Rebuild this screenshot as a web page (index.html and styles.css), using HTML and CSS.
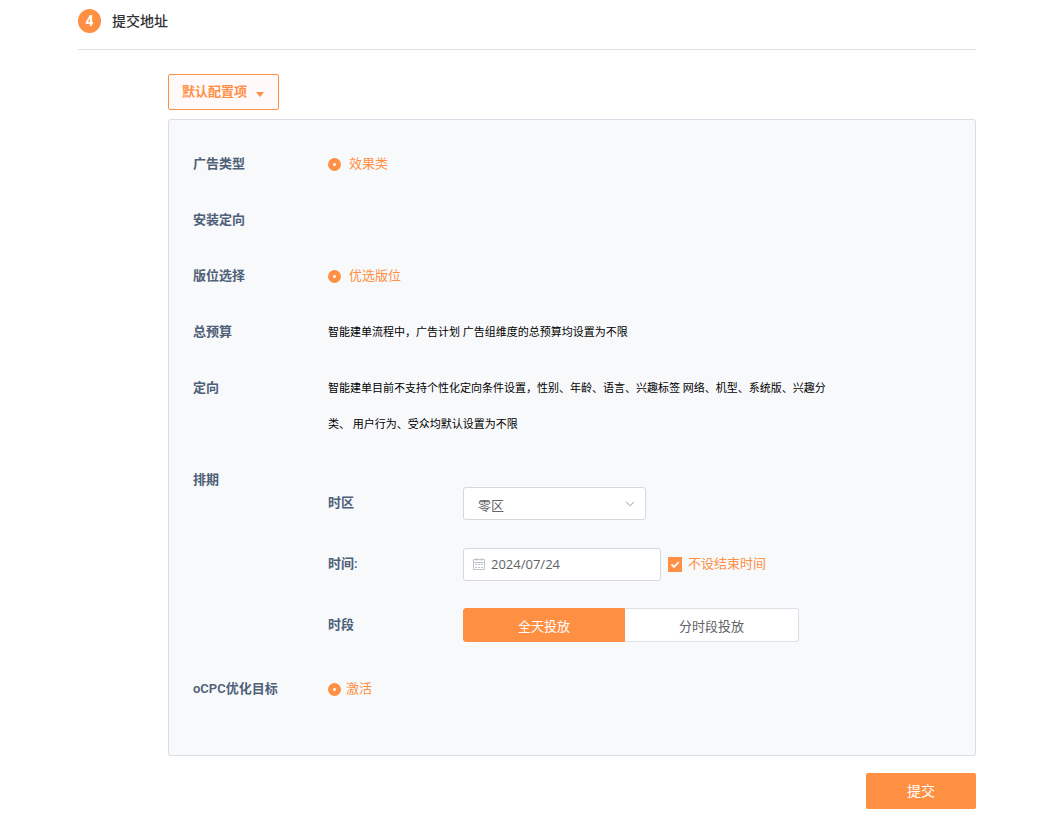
FILE: index.html
```html
<!DOCTYPE html>
<html lang="zh-CN">
<head>
<meta charset="utf-8">
<meta name="viewport" content="width=device-width, initial-scale=1">
<title>提交地址</title>
<link rel="stylesheet" href="styles.css">
</head>
<body>
<form class="page">
  <header class="step">
    <span class="step-number">4</span>
    <h1 class="step-title">提交地址</h1>
  </header>
  <main class="content">
    <button type="button" class="toggle">默认配置项
      <svg class="toggle-caret" viewBox="0 0 8 5" aria-hidden="true"><path d="M0 0h8L4 5z" fill="currentColor"/></svg>
    </button>
    <section class="panel">
      <div class="row">
        <span class="label">广告类型</span>
        <label class="option"><input type="radio" class="radio" name="type" checked>效果类</label>
      </div>
      <div class="row">
        <span class="label">安装定向</span>
      </div>
      <div class="row">
        <span class="label">版位选择</span>
        <label class="option"><input type="radio" class="radio" name="placement" checked>优选版位</label>
      </div>
      <div class="row">
        <span class="label">总预算</span>
        <p class="note">智能建单流程中，广告计划 广告组维度的总预算均设置为不限</p>
      </div>
      <div class="row">
        <span class="label">定向</span>
        <p class="note">智能建单目前不支持个性化定向条件设置，性别、年龄、语言、兴趣标签 网络、机型、系统版、兴趣分类、 用户行为、受众均默认设置为不限</p>
      </div>
      <div class="row">
        <span class="label">排期</span>
        <div class="schedule">
          <div class="schedule-row">
            <label class="label" for="zone">时区</label>
            <div class="select-box">
              <select id="zone" class="field select"><option>零区</option></select>
              <svg class="select-arrow" viewBox="0 0 10 6" aria-hidden="true"><path d="M1 .8l4 4 4-4" fill="none" stroke="currentColor" stroke-width="1.1"/></svg>
            </div>
          </div>
          <div class="schedule-row">
            <label class="label" for="date">时间:</label>
            <div class="date-box">
              <svg class="date-icon" viewBox="0 0 12 12" aria-hidden="true">
                <path d="M.5 1.5h11v10H.5zM.5 4.5h11M3.5 0v3M8.5 0v3" fill="none" stroke="currentColor"/>
                <path d="M2 6.5h8M2 9.5h8" fill="none" stroke="currentColor" stroke-dasharray="2 1"/>
              </svg>
              <input id="date" class="field date" type="text" value="2024/07/24">
            </div>
            <label class="check-option">
              <span class="check-box">
                <input type="checkbox" class="check" checked>
                <svg class="check-mark" viewBox="0 0 14 15" aria-hidden="true"><path d="M3.5 7.3l2.5 2.6 4.8-4.8" fill="none" stroke="currentColor" stroke-width="1.8"/></svg>
              </span>不设结束时间</label>
          </div>
          <div class="schedule-row">
            <span class="label">时段</span>
            <div class="segments">
              <button type="button" class="segment segment-active">全天投放</button>
              <button type="button" class="segment segment-wide">分时段投放</button>
            </div>
          </div>
        </div>
      </div>
      <div class="row row-goal">
        <span class="label">oCPC优化目标</span>
        <label class="option option-tight"><input type="radio" class="radio" name="goal" checked>激活</label>
      </div>
    </section>
    <button type="submit" class="submit">提交</button>
  </main>
</form>
</body>
</html>
```
FILE: styles.css
```css
* { box-sizing: border-box; }

body {
  margin: 0;
  background: #fff;
  color: #606266;
  font: 13px/36px Roboto, "Noto Sans CJK SC", sans-serif;
}

button, input, select { margin: 0; font: inherit; color: inherit; }
button { cursor: pointer; }

.page { padding: 0 67px 20px 78px; }

.step {
  display: flex;
  align-items: center;
  gap: 11px;
  height: 50px;
  padding-bottom: 8px;
  border-bottom: 1px solid #dcdfe6;
}
.step-number {
  width: 23px;
  height: 24px;
  border-radius: 50%;
  background: #ff8f43;
  color: #fff;
  font-size: 14px;
  font-weight: 700;
  line-height: 24px;
  text-align: center;
}
.step-title {
  margin: 0;
  color: #303133;
  font-size: 14px;
  font-weight: 500;
  line-height: 24px;
}

.content {
  display: flex;
  flex-direction: column;
  align-items: flex-start;
  padding: 24px 0 0 90px;
}
.toggle {
  display: flex;
  align-items: center;
  gap: 9px;
  height: 36px;
  padding: 0 14px 0 13px;
  border: 1px solid #ff8f43;
  border-radius: 2px;
  background: #fffaf9;
  color: #ff8f43;
  font-weight: 600;
}
.toggle-caret { width: 8px; height: 5px; margin-top: 4px; }

.panel {
  display: flex;
  flex-direction: column;
  gap: 20px;
  width: 100%;
  margin: 9px 0 17px;
  padding: 26px 24px 48px;
  border: 1px solid #d8dee6;
  border-radius: 3px;
  background: #f8f9fb;
}
.row, .schedule-row { display: flex; }
.row { min-height: 36px; }
.row-goal { margin-top: 8px; }
.label {
  flex: none;
  width: 135px;
  color: #4e6078;
  font-weight: 600;
}
.option {
  display: flex;
  align-items: center;
  gap: 8px;
  color: #ff8f43;
}
.option-tight { gap: 5px; }
.radio {
  appearance: none;
  width: 13px;
  height: 13px;
  border: 5px solid #ff8f43;
  border-radius: 50%;
  background: #fff;
}
.note {
  max-width: 504px;
  margin: 1px 0 -1px;
  color: #000;
  font-size: 11px;
}

.schedule {
  display: flex;
  flex-direction: column;
  gap: 25px;
  padding-top: 23px;
}
.schedule-row { align-items: center; }
.field {
  width: 100%;
  height: 33px;
  border: 1px solid #d5d8dc;
  border-radius: 3px;
  background: #fff;
}
.select-box { position: relative; display: flex; width: 183px; }
.select { appearance: none; padding: 0 30px 3px 14px; }
.select-arrow {
  position: absolute;
  top: 14px;
  right: 11px;
  width: 10px;
  height: 6px;
  color: #b4b8bf;
  pointer-events: none;
}
.date-box { position: relative; display: flex; width: 198px; }
.date { padding: 0 10px 0 27px; font-family: "Open Sans", sans-serif; }
.date-icon {
  position: absolute;
  top: 10px;
  left: 10px;
  width: 12px;
  height: 12px;
  color: #c0c4cc;
}
.check-option {
  display: flex;
  align-items: center;
  gap: 6px;
  margin-left: 7px;
  color: #ff8f43;
}
.check-box { display: grid; }
.check, .check-mark { grid-area: 1 / 1; width: 14px; height: 15px; }
.check { appearance: none; background: #ff8f43; }
.check-mark { color: #fff; pointer-events: none; }

.segments { display: flex; }
.segment {
  width: 162px;
  height: 34px;
  padding: 0 0 2px;
  border: 1px solid #dcdfe6;
  border-radius: 3px 0 0 3px;
  background: #fff;
}
.segment-active { border-color: #ff8f43; background: #ff8f43; color: #fff; }
.segment-wide { width: 174px; border-left: 0; border-radius: 0 3px 3px 0; }

.submit {
  align-self: flex-end;
  width: 110px;
  height: 36px;
  padding: 0;
  border: 0;
  border-radius: 2px;
  background: #ff8f43;
  color: #fff;
  font-size: 14px;
}
```
